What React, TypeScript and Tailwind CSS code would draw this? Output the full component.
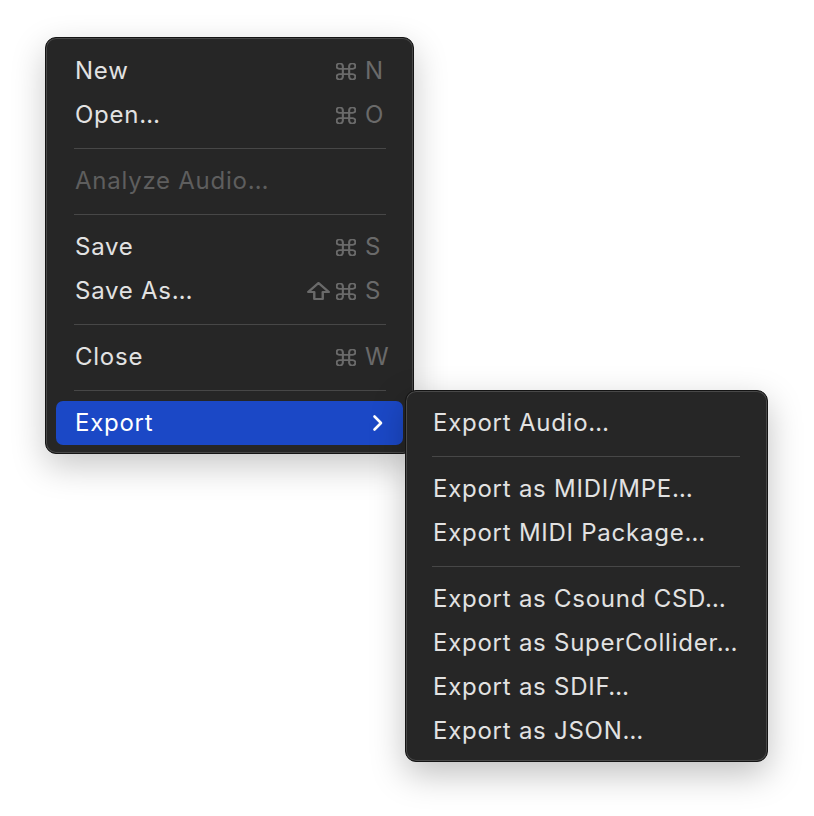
import React from "react";

type Item =
  | { kind: "sep" }
  | { kind: "item"; label: string; mods?: ("shift" | "cmd")[]; key?: string; disabled?: boolean; active?: boolean; sub?: boolean };

const mainItems: Item[] = [
  { kind: "item", label: "New", mods: ["cmd"], key: "N" },
  { kind: "item", label: "Open…", mods: ["cmd"], key: "O" },
  { kind: "sep" },
  { kind: "item", label: "Analyze Audio…", disabled: true },
  { kind: "sep" },
  { kind: "item", label: "Save", mods: ["cmd"], key: "S" },
  { kind: "item", label: "Save As…", mods: ["shift", "cmd"], key: "S" },
  { kind: "sep" },
  { kind: "item", label: "Close", mods: ["cmd"], key: "W" },
  { kind: "sep" },
  { kind: "item", label: "Export", active: true, sub: true },
];

const subItems: Item[] = [
  { kind: "item", label: "Export Audio…" },
  { kind: "sep" },
  { kind: "item", label: "Export as MIDI/MPE…" },
  { kind: "item", label: "Export MIDI Package…" },
  { kind: "sep" },
  { kind: "item", label: "Export as Csound CSD…" },
  { kind: "item", label: "Export as SuperCollider…" },
  { kind: "item", label: "Export as SDIF…" },
  { kind: "item", label: "Export as JSON…" },
];

// ⌘ glyph
function CmdIcon() {
  return (
    <svg width="20" height="17" viewBox="2.5 2.5 19 19" preserveAspectRatio="none" fill="none" stroke="currentColor" strokeWidth="2" strokeLinecap="round" strokeLinejoin="round">
      <path d="M15 6v12a3 3 0 1 0 3-3H6a3 3 0 1 0 3 3V6a3 3 0 1 0-3 3h12a3 3 0 1 0-3-3" />
    </svg>
  );
}

// ⇧ glyph
function ShiftIcon() {
  return (
    <svg width="23" height="18" viewBox="2.5 3 19 18" preserveAspectRatio="none" fill="none" stroke="currentColor" strokeWidth="2" strokeLinejoin="round">
      <path d="M8.5 20v-7H3.5L12 4l8.5 9h-5v7z" />
    </svg>
  );
}

function Chevron() {
  return (
    <svg width="12" height="18" viewBox="0 0 12 18" fill="none" stroke="currentColor" strokeWidth="2.6" strokeLinecap="round" strokeLinejoin="round">
      <path d="M2.5 2.5 9 9l-6.5 6.5" />
    </svg>
  );
}

function MenuRows({ items, sepClass, rowPad }: { items: Item[]; sepClass: string; rowPad: string }) {
  return (
    <>
      {items.map((it, i) =>
        it.kind === "sep" ? (
          <div key={i} className="h-[22px] flex items-center">
            <div className={`h-px flex-1 bg-[#474747] ${sepClass}`} />
          </div>
        ) : (
          <div
            key={i}
            className={`h-[44px] flex items-center ${rowPad} rounded-[7px] ${
              it.active ? "bg-[#1b48c6] text-white" : it.disabled ? "text-[#5e5e5e]" : "text-[#e2e2e2]"
            }`}
          >
            <span className="flex-1 whitespace-nowrap">{it.label}</span>
            {it.key && (
              <span className="flex items-center text-[#6a6a6a]">
                <span className="flex items-center gap-[6px]">
                  {it.mods?.map((m) => (m === "cmd" ? <CmdIcon key={m} /> : <ShiftIcon key={m} />))}
                </span>
                <span className="ml-[9px] w-[26px] tracking-normal">{it.key}</span>
              </span>
            )}
            {it.sub && (
              <span className="mr-[7px] text-white">
                <Chevron />
              </span>
            )}
          </div>
        )
      )}
    </>
  );
}

export default function App() {
  return (
    <div className="min-h-[816px] bg-white pl-[45px] pt-[37px] font-['Inter','Noto_Sans',sans-serif] text-[24px] tracking-[0.75px]">
      <div className="relative w-[369px]">
        <div className="h-[417px] rounded-[11px] border border-[#141414] bg-[#262626] px-[10px] pt-[11px] shadow-[inset_0_0_0_1px_rgba(255,255,255,0.16),0_12px_34px_rgba(0,0,0,0.22)]">
          <MenuRows items={mainItems} sepClass="ml-[18px] mr-[17px]" rowPad="pl-[19px] pr-[12px]" />
        </div>

        {/* submenu */}
        <div className="absolute left-[360px] top-[353px] h-[372px] w-[363px] rounded-[11px] border border-[#141414] bg-[#262626] px-[10px] pt-[10px] shadow-[inset_0_0_0_1px_rgba(255,255,255,0.16),0_12px_34px_rgba(0,0,0,0.25)]">
          <MenuRows items={subItems} sepClass="ml-[16px] mr-[17px]" rowPad="pl-[17px] pr-[12px]" />
        </div>
      </div>
    </div>
  );
}
